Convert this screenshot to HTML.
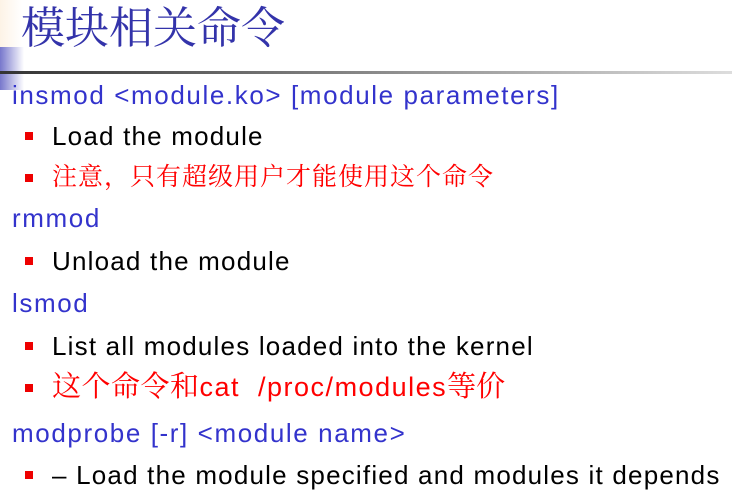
<!DOCTYPE html>
<html><head><meta charset="utf-8"><style>
body{margin:0;width:732px;height:496px;background:#fff;position:relative;overflow:hidden;font-family:"Liberation Sans","Noto Sans CJK SC",sans-serif}
.a{position:absolute;white-space:nowrap}
.t{left:21px;top:0px;font-family:"Liberation Serif","Noto Serif CJK SC",serif;font-size:44px;color:#3333aa;line-height:58px}
.b{font-size:26px;letter-spacing:1.6px;color:#3333cc;left:12px;line-height:30px}
.s{font-size:26px;letter-spacing:1.2px;color:#000;left:52px;line-height:30px}
.r{color:#ff0000}
.c{font-family:'Liberation Serif','Noto Serif CJK SC',serif;font-size:25px;letter-spacing:1px}
.q{position:absolute;left:25px;width:8px;height:8px;background:#ee0000}
</style></head><body>
<div class="a" style="left:0;top:0;width:22px;height:47px;background:linear-gradient(90deg,#fdf3e6,#fff)"></div>
<div class="a" style="left:0;top:47px;width:24px;height:43px;background:linear-gradient(90deg,#7777cc,#fff)"></div>
<div class="a" style="left:0;top:71px;width:732px;height:3px;background:linear-gradient(90deg,#333,#aaa 70%,#ddd)"></div>
<div class="a t">模块相关命令</div>
<div class="a b" style="top:80px">insmod &lt;module.ko&gt; [module parameters]</div>
<div class="q" style="top:132px"></div><div class="a s" style="top:121px">Load the module</div>
<div class="q" style="top:174px"></div><div class="a s r c" style="top:163px">注意，只有超级用户才能使用这个命令</div>
<div class="a b" style="top:203px">rmmod</div>
<div class="q" style="top:257px"></div><div class="a s" style="top:246px">Unload the module</div>
<div class="a b" style="top:288px">lsmod</div>
<div class="q" style="top:342px"></div><div class="a s" style="top:331px">List all modules loaded into the kernel</div>
<div class="q" style="top:384px"></div><div class="a s r" style="top:372px;font-size:27px;letter-spacing:1.5px"><span class="c" style="font-size:29px;letter-spacing:0.5px">这个命令和</span>cat&nbsp; /proc/modules<span class="c" style="font-size:29px;letter-spacing:0">等价</span></div>
<div class="a b" style="top:418px">modprobe [-r] &lt;module name&gt;</div>
<div class="q" style="top:471px"></div><div class="a s" style="top:460px">– Load the module specified and modules it depends</div>
</body></html>
